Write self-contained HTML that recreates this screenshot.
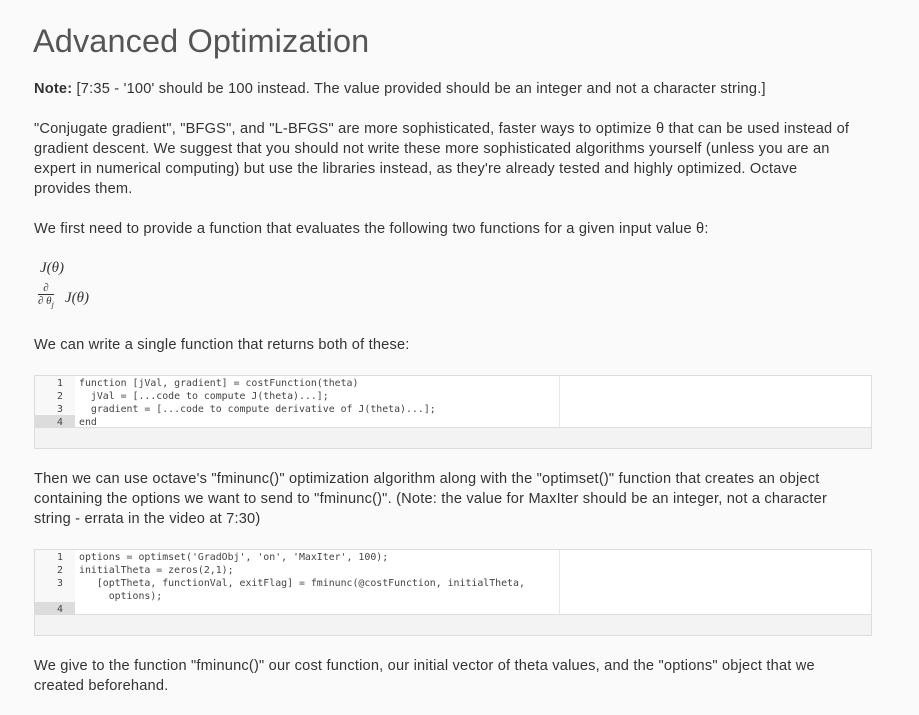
<!DOCTYPE html>
<html><head><meta charset="utf-8"><style>
body{margin:0;background:#fafafa;width:919px;height:715px;overflow:hidden;font-family:"Liberation Sans","DejaVu Sans",sans-serif;color:#333;}
.a{position:absolute;white-space:nowrap;font-size:14.6px;line-height:20px;letter-spacing:0.2px;}
h1{position:absolute;left:33px;top:23px;margin:0;font-weight:normal;font-size:32.5px;color:#555;font-family:"Liberation Sans",sans-serif;letter-spacing:0.1px;}
.m{position:absolute;font-family:"Liberation Serif",serif;font-style:italic;font-size:15px;color:#333;}
.box{position:absolute;left:34px;width:836px;border:1px solid #ddd;background:#f3f3f3;}
.ed{position:relative;background:#fff;border-bottom:1px solid #ddd;font-family:"DejaVu Sans Mono","Liberation Mono",monospace;font-size:9.9px;color:#444;}
.g{position:absolute;left:0;top:0;bottom:0;width:40px;background:#f8f8f8;}
.ln{position:absolute;left:0;width:28px;text-align:right;height:13px;line-height:13px;color:#444;}
.cl{position:absolute;left:44px;height:13px;line-height:13px;white-space:pre;}
.pm{position:absolute;left:524px;top:0;bottom:0;width:1px;background:#e8e8e8;}
</style></head><body>
<h1>Advanced Optimization</h1>
<div class="a" style="left:34px;top:79px"><b>Note:</b> [7:35 - '100' should be 100 instead. The value provided should be an integer and not a character string.]</div>
<div class="a" style="left:34px;top:119px">"Conjugate gradient", "BFGS", and "L-BFGS" are more sophisticated, faster ways to optimize θ that can be used instead of</div>
<div class="a" style="left:34px;top:139px">gradient descent. We suggest that you should not write these more sophisticated algorithms yourself (unless you are an</div>
<div class="a" style="left:34px;top:159px">expert in numerical computing) but use the libraries instead, as they're already tested and highly optimized. Octave</div>
<div class="a" style="left:34px;top:179px">provides them.</div>
<div class="a" style="left:34px;top:219px">We first need to provide a function that evaluates the following two functions for a given input value θ:</div>
<div class="m" style="left:40px;top:260px">J(θ)</div>
<div class="m" style="left:38px;top:283px;font-size:11px;line-height:11px;text-align:center">∂<br><span style="border-top:1px solid #333;display:inline-block;padding-top:1px">∂ θ<sub style="font-size:8px">j</sub></span></div>
<div class="m" style="left:65px;top:290px">J(θ)</div>
<div class="a" style="left:34px;top:335px">We can write a single function that returns both of these:</div>
<div class="box" style="top:375px;height:72px">
<div class="ed" style="height:51px">
<div class="g"></div><div class="pm"></div>
<div style="position:absolute;left:0;top:39px;width:40px;height:13px;background:#dcdcdc"></div>
<div class="ln" style="top:1px">1</div><div class="cl" style="top:1px">function [jVal, gradient] = costFunction(theta)</div>
<div class="ln" style="top:14px">2</div><div class="cl" style="top:14px">  jVal = [...code to compute J(theta)...];</div>
<div class="ln" style="top:27px">3</div><div class="cl" style="top:27px">  gradient = [...code to compute derivative of J(theta)...];</div>
<div class="ln" style="top:40px">4</div><div class="cl" style="top:40px">end</div>
</div></div>
<div class="a" style="left:34px;top:469px">Then we can use octave's "fminunc()" optimization algorithm along with the "optimset()" function that creates an object</div>
<div class="a" style="left:34px;top:489px">containing the options we want to send to "fminunc()". (Note: the value for MaxIter should be an integer, not a character</div>
<div class="a" style="left:34px;top:509px">string - errata in the video at 7:30)</div>
<div class="box" style="top:549px;height:85px">
<div class="ed" style="height:64px">
<div class="g"></div><div class="pm"></div>
<div style="position:absolute;left:0;top:52px;width:40px;height:13px;background:#dcdcdc"></div>
<div class="ln" style="top:1px">1</div><div class="cl" style="top:1px">options = optimset('GradObj', 'on', 'MaxIter', 100);</div>
<div class="ln" style="top:14px">2</div><div class="cl" style="top:14px">initialTheta = zeros(2,1);</div>
<div class="ln" style="top:27px">3</div><div class="cl" style="top:27px">   [optTheta, functionVal, exitFlag] = fminunc(@costFunction, initialTheta,</div>
<div class="cl" style="top:40px">     options);</div>
<div class="ln" style="top:53px">4</div>
</div></div>
<div class="a" style="left:34px;top:656px">We give to the function "fminunc()" our cost function, our initial vector of theta values, and the "options" object that we</div>
<div class="a" style="left:34px;top:676px">created beforehand.</div>
</body></html>
